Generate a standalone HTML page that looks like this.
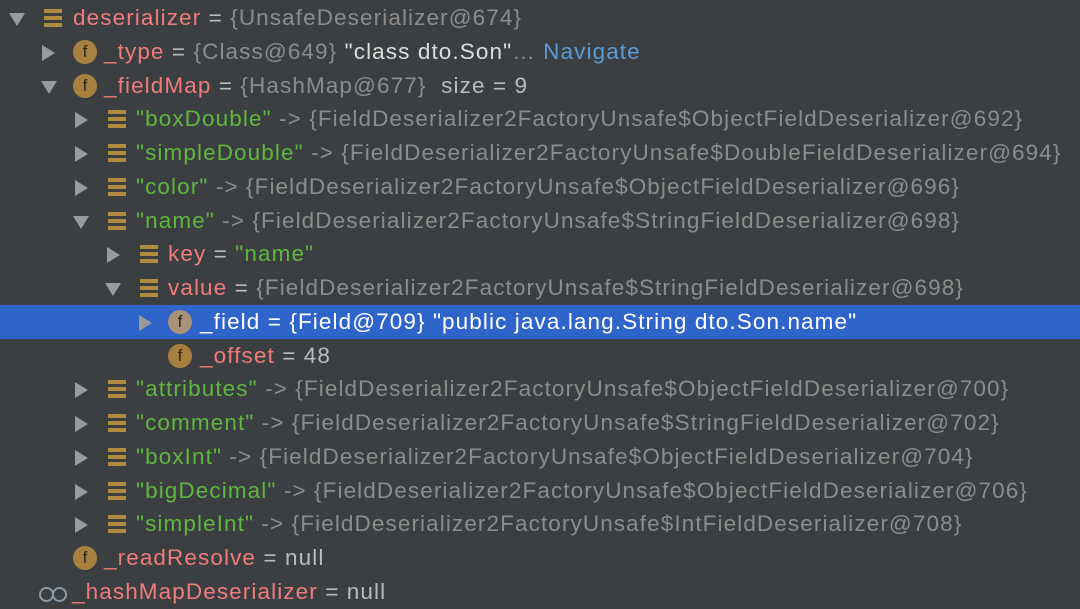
<!DOCTYPE html>
<html><head><meta charset="utf-8"><style>
body{margin:0;width:1080px;height:608px;background:#3c3f41;overflow:hidden;font-family:"Liberation Sans",sans-serif;font-size:22.5px;letter-spacing:1.1px}
.r{position:absolute;left:0;width:1080px;height:34px;line-height:34px;white-space:nowrap;color:#bbbbbb}
.sel{background:#2f65ca}
.a{position:absolute;top:10px;width:0;height:0}
.ar{border-top:8px solid transparent;border-bottom:8px solid transparent;border-left:13px solid #9a9a9a}
.ad{top:12px;border-left:8px solid transparent;border-right:8px solid transparent;border-top:13px solid #9a9a9a;}
.l{position:absolute;top:8px;width:18px;height:18px;background:linear-gradient(#b08b3e 0 4px,transparent 4px 7px,#b08b3e 7px 11px,transparent 11px 14px,#b08b3e 14px 18px)}
.f{position:absolute;top:5px;width:24px;height:24px;border-radius:50%;background:#a88140;color:#2e271d;font-size:17px;line-height:24px;text-align:center;letter-spacing:0}
.t{position:absolute;top:0}
.n{color:#f07b7b}.g{color:#8c8c8c}.s{color:#5fb63f}.w{color:#dddddd}.b{color:#5a9bd6}
.sel .t{color:#fff}
.o{position:absolute;top:12px;width:11px;height:11px;border:2px solid #8a9aa6;border-radius:50%}
</style></head><body>

<div class="r" style="top:1px"><span class="a ad" style="left:9px"></span><span class="l" style="left:44px"></span><span class="t" style="left:73px"><span class="n">deserializer</span> = <span class="g">{UnsafeDeserializer@674}</span></span></div>
<div class="r" style="top:35px"><span class="a ar" style="left:42px"></span><span class="f" style="left:73px">f</span><span class="t" style="left:104px"><span class="n">_type</span> = <span class="g">{Class@649}</span> <span class="w">"class dto.Son"</span><span class="g">…</span> <span class="b">Navigate</span></span></div>
<div class="r" style="top:69px"><span class="a ad" style="left:41px"></span><span class="f" style="left:73px">f</span><span class="t" style="left:104px"><span class="n">_fieldMap</span> = <span class="g">{HashMap@677}</span> &nbsp;size = 9</span></div>
<div class="r" style="top:102px"><span class="a ar" style="left:75px"></span><span class="l" style="left:108px"></span><span class="t" style="left:136px"><span class="s">"boxDouble"</span> <span class="g">-&gt; {FieldDeserializer2FactoryUnsafe$ObjectFieldDeserializer@692}</span></span></div>
<div class="r" style="top:136px"><span class="a ar" style="left:75px"></span><span class="l" style="left:108px"></span><span class="t" style="left:136px"><span class="s">"simpleDouble"</span> <span class="g">-&gt; {FieldDeserializer2FactoryUnsafe$DoubleFieldDeserializer@694}</span></span></div>
<div class="r" style="top:170px"><span class="a ar" style="left:75px"></span><span class="l" style="left:108px"></span><span class="t" style="left:136px"><span class="s">"color"</span> <span class="g">-&gt; {FieldDeserializer2FactoryUnsafe$ObjectFieldDeserializer@696}</span></span></div>
<div class="r" style="top:204px"><span class="a ad" style="left:73px"></span><span class="l" style="left:108px"></span><span class="t" style="left:136px"><span class="s">"name"</span> <span class="g">-&gt; {FieldDeserializer2FactoryUnsafe$StringFieldDeserializer@698}</span></span></div>
<div class="r" style="top:237px"><span class="a ar" style="left:107px"></span><span class="l" style="left:140px"></span><span class="t" style="left:168px"><span class="n">key</span> = <span class="s">"name"</span></span></div>
<div class="r" style="top:271px"><span class="a ad" style="left:105px"></span><span class="l" style="left:140px"></span><span class="t" style="left:168px"><span class="n">value</span> = <span class="g">{FieldDeserializer2FactoryUnsafe$StringFieldDeserializer@698}</span></span></div>
<div class="r sel" style="top:305px"><span class="a ar" style="left:139px"></span><span class="f" style="left:168px;background:#a89378">f</span><span class="t" style="left:200px">_field = {Field@709} "public java.lang.String dto.Son.name"</span></div>
<div class="r" style="top:339px"><span class="f" style="left:168px">f</span><span class="t" style="left:200px"><span class="n">_offset</span> = 48</span></div>
<div class="r" style="top:372px"><span class="a ar" style="left:75px"></span><span class="l" style="left:108px"></span><span class="t" style="left:136px"><span class="s">"attributes"</span> <span class="g">-&gt; {FieldDeserializer2FactoryUnsafe$ObjectFieldDeserializer@700}</span></span></div>
<div class="r" style="top:406px"><span class="a ar" style="left:75px"></span><span class="l" style="left:108px"></span><span class="t" style="left:136px"><span class="s">"comment"</span> <span class="g">-&gt; {FieldDeserializer2FactoryUnsafe$StringFieldDeserializer@702}</span></span></div>
<div class="r" style="top:440px"><span class="a ar" style="left:75px"></span><span class="l" style="left:108px"></span><span class="t" style="left:136px"><span class="s">"boxInt"</span> <span class="g">-&gt; {FieldDeserializer2FactoryUnsafe$ObjectFieldDeserializer@704}</span></span></div>
<div class="r" style="top:474px"><span class="a ar" style="left:75px"></span><span class="l" style="left:108px"></span><span class="t" style="left:136px"><span class="s">"bigDecimal"</span> <span class="g">-&gt; {FieldDeserializer2FactoryUnsafe$ObjectFieldDeserializer@706}</span></span></div>
<div class="r" style="top:507px"><span class="a ar" style="left:75px"></span><span class="l" style="left:108px"></span><span class="t" style="left:136px"><span class="s">"simpleInt"</span> <span class="g">-&gt; {FieldDeserializer2FactoryUnsafe$IntFieldDeserializer@708}</span></span></div>
<div class="r" style="top:541px"><span class="f" style="left:73px">f</span><span class="t" style="left:104px"><span class="n">_readResolve</span> = null</span></div>
<div class="r" style="top:575px"><span class="o" style="left:39px"></span><span class="o" style="left:52px"></span><span class="t" style="left:72px"><span class="n">_hashMapDeserializer</span> = null</span></div>
</body></html>
